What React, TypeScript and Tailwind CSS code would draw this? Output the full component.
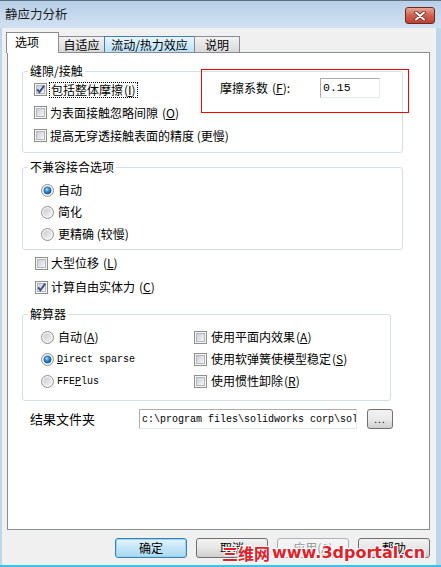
import React from "react"

function Check({ on }: { on?: boolean }) {
  return (
    <svg width="13" height="13" viewBox="0 0 13 13" className="shrink-0">
      <defs>
        <linearGradient id="cbg" x1="0" y1="0" x2="1" y2="1">
          <stop offset="0" stopColor="#c9cdd3" />
          <stop offset="1" stopColor="#f8f8f8" />
        </linearGradient>
      </defs>
      <rect x="0.5" y="0.5" width="12" height="12" fill="#f5f5f5" stroke="#8e8f8f" />
      <rect x="2.5" y="2.5" width="8" height="8" fill="url(#cbg)" stroke="#b3b7bc" />
      {on && <path d="M3.2 6.4 L5.4 9.2 L10.2 2.6" stroke="#3b4d8a" strokeWidth="1.9" fill="none" />}
    </svg>
  )
}

function Radio({ on }: { on?: boolean }) {
  return (
    <svg width="13" height="13" viewBox="0 0 13 13" className="shrink-0">
      <defs>
        <linearGradient id="rdg" x1="0" y1="0" x2="1" y2="1">
          <stop offset="0" stopColor="#c6cacf" />
          <stop offset="1" stopColor="#f5f5f5" />
        </linearGradient>
        <radialGradient id="rdb" cx="0.4" cy="0.35" r="0.7">
          <stop offset="0" stopColor="#a6dcfb" />
          <stop offset="0.5" stopColor="#2a8ad4" />
          <stop offset="1" stopColor="#0d4f8a" />
        </radialGradient>
      </defs>
      <circle cx="6.5" cy="6.5" r="6" fill="#f4f4f4" stroke="#8e8f8f" />
      <circle cx="6.5" cy="6.5" r="4.2" fill="url(#rdg)" />
      {on && <circle cx="6.5" cy="6.5" r="3.6" fill="url(#rdb)" stroke="#1a4d7c" strokeWidth="0.6" />}
    </svg>
  )
}

function Key({ k, space }: { k: string; space?: boolean }) {
  return (
    <span className={space ? "ml-[4px]" : "ml-[1px]"}>
      (<u>{k}</u>)
    </span>
  )
}

const mono = "font-['Liberation_Mono',monospace] text-[10px]"

export default function App() {
  return (
    <div className="w-[441px] h-[567px] overflow-hidden relative flex flex-col bg-[#bfd5ec] border-t border-[#5f6f82] font-['Noto_Sans_CJK_SC','Noto_Sans',sans-serif] text-[12px] text-black">
      {/* title bar */}
      <div className="h-[27px] shrink-0 flex items-center justify-between pl-[5px] pr-[6px] bg-linear-to-b from-[#b8cfe8] to-[#d2e1f1]">
        <span className="text-[12.5px] leading-none text-[#1b1b1b]">静应力分析</span>
        <div className="w-[30px] h-[17px] mt-[2px] rounded-[3px] border border-[#6b2b24] bg-linear-to-b from-[#e6a596] via-[#d2604f] to-[#c0402f] flex items-center justify-center">
          <svg width="12" height="10" viewBox="0 0 12 10">
            <path d="M2 1.5 L10 8.5 M10 1.5 L2 8.5" stroke="#5a2a26" strokeWidth="3.6" strokeLinecap="round" />
            <path d="M2 1.5 L10 8.5 M10 1.5 L2 8.5" stroke="#ffffff" strokeWidth="2" strokeLinecap="round" />
          </svg>
        </div>
      </div>

      {/* client */}
      <div className="flex-1 ml-[2px] mr-[5px] bg-[#f0f0f0] flex flex-col pt-[4px]">
        {/* tabs */}
        <div className="flex items-end pl-[4px] h-[20px]">
          <div className="relative z-10 -mb-px h-[21px] w-[53px] bg-white border border-b-0 border-[#898c95] pl-[8px] pt-[1px] leading-[16px] text-[12px]">
            选项
          </div>
          <div className="h-[16px] w-[47px] -ml-px border border-b-0 border-[#898c95] bg-linear-to-b from-[#f2f2f2] to-[#d9d9d9] flex items-center justify-center leading-none">
            自适应
          </div>
          <div className="h-[16px] w-[91px] -ml-px border border-b-0 border-[#3c7fb1] bg-linear-to-b from-[#e9f5fd] to-[#b9e2fb] flex items-center justify-center leading-none">
            流动/热力效应
          </div>
          <div className="h-[16px] w-[46px] -ml-px border border-b-0 border-[#898c95] bg-linear-to-b from-[#f2f2f2] to-[#d9d9d9] flex items-center justify-center leading-none">
            说明
          </div>
        </div>

        {/* panel */}
        <div className="ml-[5px] w-[423px] h-[478px] border border-[#898c95] bg-white flex flex-col">
          {/* group 1 */}
          <fieldset className="ml-[14px] mt-[11px] w-[381px] border border-[#d5dfe5] rounded-[3px] pb-[5px] pl-[11px] pr-[22px]">
            <legend className="ml-[-6px] px-[2px] leading-[14px]">缝隙/接触</legend>
            <div className="h-[23px] flex items-start">
              <div className="h-[23px] flex items-center gap-[2px]">
                <Check on />
                <span className="border border-dotted border-black px-[1px] leading-[14px]">
                  包括整体摩擦<Key k="I" />
                </span>
              </div>
              <div className="ml-auto flex items-center h-[20px]">
                <span className="w-[100px]">摩擦系数<Key k="F" space />:</span>
                <div className="w-[60px] h-[20px] border border-[#abadb3] border-r-[#e3e9ef] border-b-[#e3e9ef] bg-white pl-[2px] flex items-center font-['Liberation_Mono',monospace] text-[11.5px]">
                  0.15
                </div>
              </div>
            </div>
            <div className="h-[23px] flex items-center gap-[3px] whitespace-nowrap">
              <Check />
              <span>为表面接触忽略间隙<Key k="O" space /></span>
            </div>
            <div className="h-[23px] flex items-center gap-[3px] whitespace-nowrap">
              <Check />
              <span>提高无穿透接触表面的精度 (更慢)</span>
            </div>
          </fieldset>

          {/* group 2 */}
          <fieldset className="ml-[14px] mt-[7px] w-[381px] border border-[#d5dfe5] rounded-[3px] pt-[5px] pb-[4px] pl-[18px]">
            <legend className="ml-[-13px] px-[2px] leading-[14px]">不兼容接合选项</legend>
            <div className="h-[22px] flex items-center gap-[4px]">
              <Radio on />
              <span>自动</span>
            </div>
            <div className="h-[22px] flex items-center gap-[4px]">
              <Radio />
              <span>简化</span>
            </div>
            <div className="h-[22px] flex items-center gap-[4px]">
              <Radio />
              <span>更精确 (较慢)</span>
            </div>
          </fieldset>

          {/* loose checkboxes */}
          <div className="mt-[1px] pl-[27px] flex flex-col">
            <div className="h-[24px] flex items-center gap-[3px]">
              <Check />
              <span>大型位移<Key k="L" space /></span>
            </div>
            <div className="h-[24px] flex items-center gap-[3px]">
              <Check on />
              <span>计算自由实体力<Key k="C" space /></span>
            </div>
          </div>

          {/* group 3 */}
          <fieldset className="ml-[14px] mt-[8px] w-[369px] border border-[#d5dfe5] rounded-[3px] pt-[5px] pb-[8px] pl-[18px]">
            <legend className="ml-[-13px] px-[2px] leading-[14px]">解算器</legend>
            <div className="grid grid-cols-[153px_1fr]">
              <div className="h-[22px] flex items-center gap-[4px]">
                <Radio />
                <span>自动<Key k="A" /></span>
              </div>
              <div className="h-[22px] flex items-center gap-[4px]">
                <Check />
                <span>使用平面内效果<Key k="A" /></span>
              </div>
              <div className="h-[22px] flex items-center gap-[3px]">
                <Radio on />
                <span className={mono}>
                  <u>D</u>irect sparse
                </span>
              </div>
              <div className="h-[22px] flex items-center gap-[4px]">
                <Check />
                <span>使用软弹簧使模型稳定<Key k="S" /></span>
              </div>
              <div className="h-[22px] flex items-center gap-[3px]">
                <Radio />
                <span className={mono}>
                  FFE<u>P</u>lus
                </span>
              </div>
              <div className="h-[22px] flex items-center gap-[4px]">
                <Check />
                <span>使用惯性卸除<Key k="R" /></span>
              </div>
            </div>
          </fieldset>

          {/* results folder */}
          <div className="mt-[8px] pl-[22px] h-[20px] flex items-center">
            <span className="w-[109px] text-[13px]">结果文件夹</span>
            <div className={"w-[218px] h-[20px] border border-[#abadb3] border-r-[#e3e9ef] border-b-[#e3e9ef] bg-white pl-[2px] overflow-hidden whitespace-nowrap flex items-center " + mono}>
              {"c:\\program files\\solidworks corp\\solidworks"}
            </div>
            <div className="ml-[10px] w-[26px] h-[20px] rounded-[3px] border border-[#707070] bg-linear-to-b from-[#f2f2f2] via-[#ebebeb] to-[#cfcfcf] flex items-center justify-center text-[10px] leading-none tracking-[1px]">
              ...
            </div>
          </div>
        </div>

        {/* buttons */}
        <div className="mt-[8px] pr-[6px] flex justify-end gap-[9px]">
          <div className="w-[72px] h-[20px] rounded-[3px] border border-[#3c7fb1] bg-linear-to-b from-[#e5f4fc] via-[#c4e5f6] to-[#a8d8f3] flex items-center justify-center leading-none shadow-[inset_0_0_0_1px_#94d6f5]">
            确定
          </div>
          <div className="w-[72px] h-[20px] rounded-[3px] border border-[#707070] bg-linear-to-b from-[#f2f2f2] via-[#e6e6e6] to-[#cfcfcf] flex items-center justify-center leading-none">
            取消
          </div>
          <div className="w-[72px] h-[20px] rounded-[3px] border border-[#adb2b5] bg-[#f4f4f4] flex items-center justify-center leading-none text-[#9a9a9a]">
            应用(<u>A</u>)
          </div>
          <div className="w-[72px] h-[20px] rounded-[3px] border border-[#707070] bg-linear-to-b from-[#f2f2f2] via-[#e6e6e6] to-[#cfcfcf] flex items-center justify-center leading-none">
            帮助
          </div>
        </div>
      </div>
      <div className="h-[2px] shrink-0 bg-[#36c4ee]" />

      {/* annotation box */}
      <div className="absolute left-[201px] top-[68px] w-[208px] h-[44px] border border-[#ff0000]" />

      {/* watermark */}
      <div className="absolute left-[222px] top-[544px] flex items-center whitespace-nowrap font-bold text-[#e3202a] [text-shadow:1px_1px_0_#fff,-1px_-1px_0_#fff,1px_-1px_0_#fff,-1px_1px_0_#fff,0_1px_0_#fff,0_-1px_0_#fff,1px_0_0_#fff,-1px_0_0_#fff]">
        <span className="text-[16px] leading-none">三维网</span>
        <span className="ml-[2px] font-['DejaVu_Sans',sans-serif] text-[16px] leading-none">www.3dportal.cn</span>
      </div>
    </div>
  )
}
